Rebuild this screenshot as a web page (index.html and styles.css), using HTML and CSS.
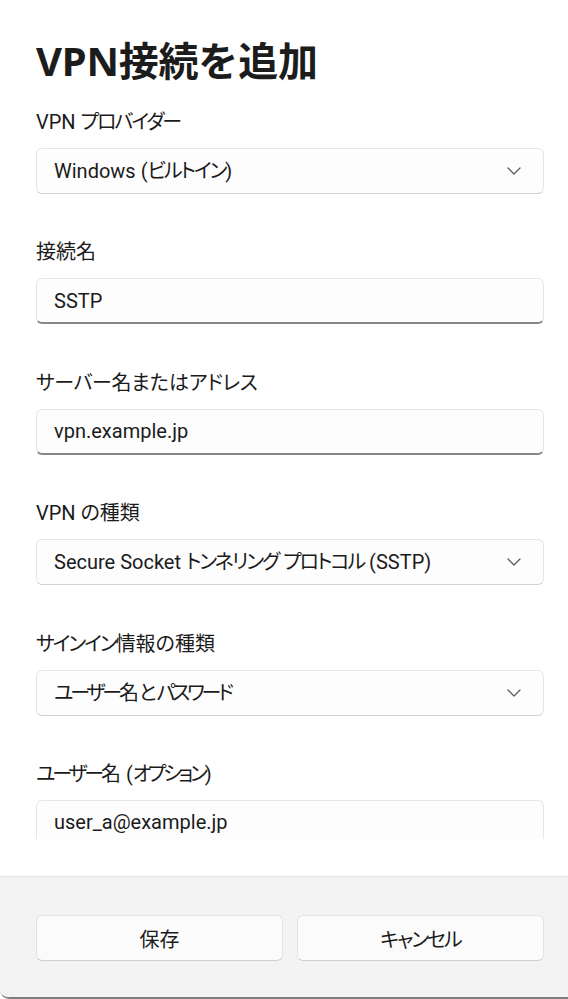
FILE: index.html
```html
<!DOCTYPE html>
<html lang="ja">
<head>
<meta charset="utf-8">
<title>VPN接続を追加</title>
<link rel="stylesheet" href="styles.css">
</head>
<body>
<div class="window">
  <div class="content">
    <h1 class="title">VPN接続を追加</h1>

    <div class="field">
      <div class="label">VPN <span class="k">プロバイダー</span></div>
      <div class="select">
        <span class="value">Windows (<span class="k">ビルトイン</span>)</span>
        <svg class="chev" width="14" height="8" viewBox="0 0 14 8"><path d="M1 1 L7 7 L13 1" fill="none" stroke="#5c5c5c" stroke-width="1.3" stroke-linecap="round" stroke-linejoin="round"/></svg>
      </div>
    </div>

    <div class="field">
      <div class="label">接続名</div>
      <div class="input"><span class="value">SSTP</span></div>
    </div>

    <div class="field">
      <div class="label"><span class="k1">サーバー</span>名または<span class="k1">アドレス</span></div>
      <div class="input"><span class="value">vpn.example.jp</span></div>
    </div>

    <div class="field">
      <div class="label">VPN の種類</div>
      <div class="select">
        <span class="value">Secure Socket <span class="k">トンネリング</span> <span class="k">プロトコル</span> (SSTP)</span>
        <svg class="chev" width="14" height="8" viewBox="0 0 14 8"><path d="M1 1 L7 7 L13 1" fill="none" stroke="#5c5c5c" stroke-width="1.3" stroke-linecap="round" stroke-linejoin="round"/></svg>
      </div>
    </div>

    <div class="field">
      <div class="label"><span class="k">サインイン</span>情報の種類</div>
      <div class="select">
        <span class="value"><span class="k3">ユーザー</span>名と<span class="k3">パスワード</span></span>
        <svg class="chev" width="14" height="8" viewBox="0 0 14 8"><path d="M1 1 L7 7 L13 1" fill="none" stroke="#5c5c5c" stroke-width="1.3" stroke-linecap="round" stroke-linejoin="round"/></svg>
      </div>
    </div>

    <div class="field">
      <div class="label"><span class="k3">ユーザー</span>名 (<span class="k3">オプション</span>)</div>
      <div class="input"><span class="value">user_a@example.jp</span></div>
    </div>
  </div>
  <div class="spacer"></div>
  <div class="footer">
    <button class="btn">保存</button>
    <button class="btn"><span class="k">キャンセル</span></button>
  </div>
</div>
</body>
</html>
```

FILE: styles.css
```css
html, body {
  margin: 0;
  padding: 0;
  background: #ffffff;
}
body {
  width: 568px;
  height: 999px;
  overflow: hidden;
  font-family: "Roboto", "Noto Sans CJK JP", sans-serif;
  font-feature-settings: "palt";
  color: #1b1b1b;
}
.k {
  letter-spacing: -2px;
}
.k1 {
  letter-spacing: -0.4px;
}
.k3 {
  letter-spacing: -3.2px;
}
.window {
  box-sizing: border-box;
  height: 999px;
  display: flex;
  flex-direction: column;
  background: #ffffff;
  border-bottom: 2px solid #808080;
  border-bottom-left-radius: 9px;
  overflow: hidden;
}
.content {
  height: 839px;
  overflow: hidden;
  padding: 35px 24px 0 36px;
  box-sizing: border-box;
  flex: none;
}
.title {
  margin: 0 0 21px 0;
  font-family: "Noto Sans", "Noto Sans CJK JP", sans-serif;
  font-feature-settings: normal;
  font-size: 40px;
  line-height: 52px;
  font-weight: 700;
  color: #1c1c1c;
  letter-spacing: -0.2px;
}
.field {
  margin-bottom: 44.4px;
}
.label {
  font-size: 20px;
  line-height: 28px;
  margin-bottom: 12px;
  color: #1b1b1b;
}
.select, .input {
  box-sizing: border-box;
  height: 46px;
  display: flex;
  align-items: center;
  padding: 0 22px 0 17px;
  background: #fdfdfd;
  border: 1px solid #e6e6e6;
  border-radius: 6px;
  font-size: 20px;
  color: #1b1b1b;
}
.select {
  border-bottom-color: #d2d2d2;
  justify-content: space-between;
}
.input {
  border-bottom: 2px solid #878787;
}
.value {
  white-space: nowrap;
  line-height: 28px;
}
.chev {
  flex: none;
}
.spacer {
  height: 37px;
  flex: none;
}
.footer {
  flex: 1;
  background: #f3f3f3;
  border-top: 1px solid #e5e5e5;
  display: flex;
  gap: 14px;
  padding: 38px 24px 0 36px;
  box-sizing: border-box;
}
.btn {
  box-sizing: border-box;
  width: 247px;
  height: 46px;
  background: #fbfbfb;
  border: 1px solid #e3e3e3;
  border-bottom-color: #cfcfcf;
  border-radius: 6px;
  font-family: "Roboto", "Noto Sans CJK JP", sans-serif;
  font-feature-settings: "palt";
  font-size: 20px;
  color: #1b1b1b;
  padding: 0;
}
```
